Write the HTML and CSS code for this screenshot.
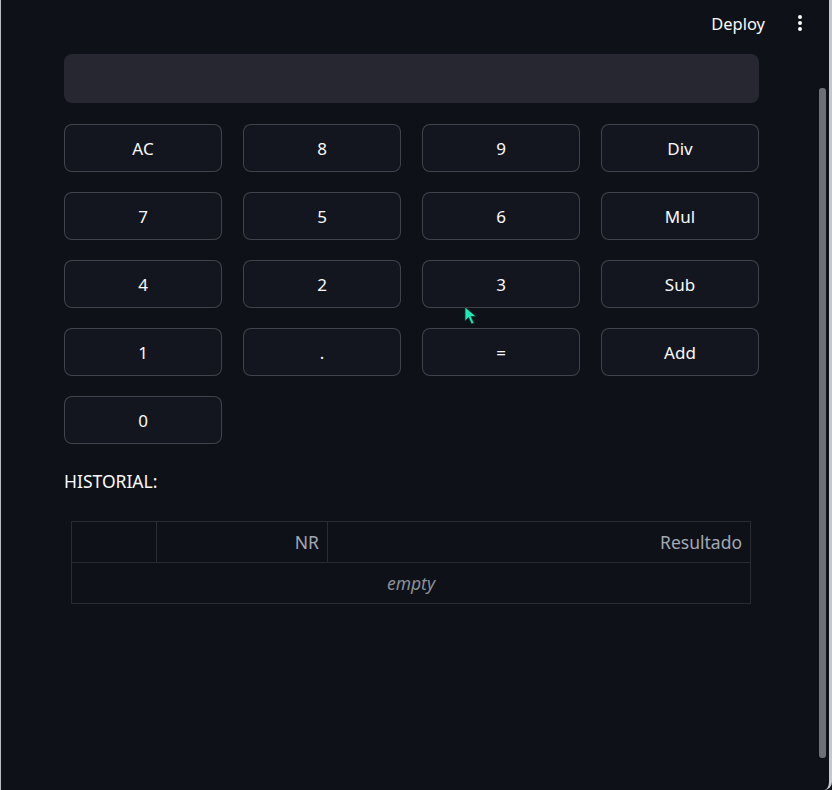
FILE: index.html
```html
<!DOCTYPE html>
<html lang="es">
<head>
<meta charset="utf-8">
<title>Calculadora</title>
<link rel="stylesheet" href="styles.css">
</head>
<body>
<div class="window">
  <header class="topbar">
    <span class="deploy">Deploy</span>
    <span class="menu" aria-label="menu">
      <svg width="6" height="18" viewBox="0 0 6 18"><circle cx="3" cy="3" r="2" fill="#fafafa"/><circle cx="3" cy="9" r="2" fill="#fafafa"/><circle cx="3" cy="15" r="2" fill="#fafafa"/></svg>
    </span>
  </header>
  <main class="main">
    <div class="display"></div>
    <div class="keys">
      <button class="key">AC</button>
      <button class="key">8</button>
      <button class="key">9</button>
      <button class="key">Div</button>
      <button class="key">7</button>
      <button class="key">5</button>
      <button class="key">6</button>
      <button class="key">Mul</button>
      <button class="key">4</button>
      <button class="key">2</button>
      <button class="key">3</button>
      <button class="key">Sub</button>
      <button class="key">1</button>
      <button class="key">.</button>
      <button class="key">=</button>
      <button class="key">Add</button>
      <button class="key">0</button>
    </div>
    <p class="label">HISTORIAL:</p>
    <table class="history">
      <thead>
        <tr><th class="c-idx"></th><th class="c-nr">NR</th><th class="c-res">Resultado</th></tr>
      </thead>
      <tbody>
        <tr><td colspan="3" class="empty">empty</td></tr>
      </tbody>
    </table>
  </main>
  <div class="scroll-thumb"></div>
  <svg class="cursor" width="14" height="20" viewBox="0 0 14 20"><path d="M1 1 L1 15 L4.5 11.5 L7.5 18 L10 17 L7 10.5 L12 10.5 Z" fill="#1de9b6" stroke="#0b3d30" stroke-width="0.8"/></svg>
</div>
</body>
</html>
```

FILE: styles.css
```css
* { box-sizing: border-box; }
html, body { margin: 0; padding: 0; background: #0e1117; }
body {
  font-family: "Noto Sans", "Open Sans", sans-serif;
  color: #fafafa;
}
.window {
  position: relative;
  width: 832px;
  height: 790px;
  background: #0e1117;
  border-left: 1px solid #b9bdc6;
  border-right: 3px solid #c5c8cf;
  border-bottom-right-radius: 8px;
  overflow: hidden;
}
.topbar {
  height: 46px;
  display: flex;
  align-items: center;
  justify-content: flex-end;
  padding-right: 26px;
  gap: 32px;
}
.deploy {
  font-size: 16.5px;
  font-weight: 400;
  color: #fafafa;
}
.menu { display: flex; align-items: center; }
.main {
  padding: 8px 0 0 63px;
  width: 758px;
}
.display {
  height: 49px;
  background: #262730;
  border-radius: 8px;
}
.keys {
  margin-top: 21px;
  display: grid;
  grid-template-columns: repeat(4, 1fr);
  column-gap: 21px;
  row-gap: 20px;
}
.key {
  height: 48px;
  background: #13161f;
  border: 1px solid rgba(250, 250, 250, 0.2);
  border-radius: 8px;
  color: #fafafa;
  font-family: "Noto Sans", "Open Sans", sans-serif;
  font-size: 17px;
  padding: 0;
}
.label {
  margin: 25px 0 0 0;
  font-size: 17.5px;
  line-height: 24px;
}
.history {
  margin: 28px 0 0 7px;
  width: 680px;
  border-collapse: collapse;
  font-size: 17.5px;
}
.history th, .history td {
  border: 1px solid #2a2c34;
  height: 41px;
  padding: 0 8px;
}
.history th {
  font-weight: 400;
  color: #a3a8b4;
  text-align: right;
}
.c-idx { width: 85px; }
.c-nr { width: 171px; }
.empty {
  text-align: center;
  font-style: italic;
  color: #8b8f99;
}
.scroll-thumb {
  position: absolute;
  left: 818px;
  top: 88px;
  width: 7px;
  height: 670px;
  background: #6f7077;
  border-radius: 3px;
}
.cursor {
  position: absolute;
  left: 463px;
  top: 306px;
}
```
